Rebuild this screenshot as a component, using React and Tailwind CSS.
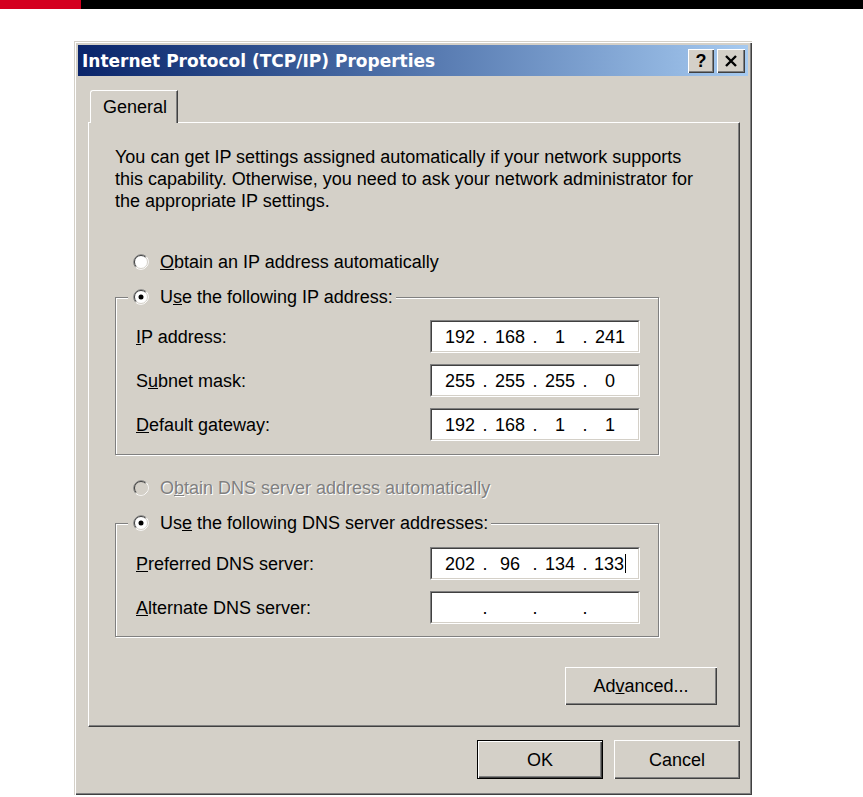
import React from 'react'

const Radio = ({ checked, disabled }) => (
  <svg width="16" height="16" viewBox="0 0 16 16" className="shrink-0">
    <circle cx="8" cy="8" r="7" fill={disabled ? '#d4d0c8' : '#fff'} />
    <path d="M2.7 13.3 A7.5 7.5 0 0 1 13.3 2.7" fill="none" stroke="#808080" />
    <path d="M13.3 2.7 A7.5 7.5 0 0 1 2.7 13.3" fill="none" stroke="#fff" />
    <path d="M3.4 12.6 A6.5 6.5 0 0 1 12.6 3.4" fill="none" stroke="#404040" />
    <path d="M12.6 3.4 A6.5 6.5 0 0 1 3.4 12.6" fill="none" stroke="#d4d0c8" />
    {checked && <circle cx="8" cy="8" r="2.5" fill="#000" />}
  </svg>
)

const IpBox = ({ parts, caret }) => (
  <div className="w-[210px] h-[33px] border border-t-[#808080] border-l-[#808080] border-r-white border-b-white">
    <div className="h-full flex items-center pl-[8px] bg-white border border-t-[#404040] border-l-[#404040] border-r-[#d4d0c8] border-b-[#d4d0c8]">
      {parts.map((p, i) => (
        <React.Fragment key={i}>
          <span className="w-[40px] flex items-center justify-center">
            {p}
            {caret && i === 3 && <span className="inline-block w-px h-[19px] bg-black ml-px" />}
          </span>
          {i < 3 && <span className="w-[10px] text-center">.</span>}
        </React.Fragment>
      ))}
    </div>
  </div>
)

const Field = ({ label, parts, caret }) => (
  <div className="flex items-center justify-between h-[33px]">
    <span>{label}</span>
    <IpBox parts={parts} caret={caret} />
  </div>
)

const Group = ({ legend, children, pt, pb }) => (
  <fieldset className="w-[544px] border border-[#808080] shadow-[inset_1px_1px_0_#fff,1px_1px_0_#fff]">
    <legend className="ml-[12px] pl-[5px] pr-[3px] bg-[#d4d0c8]">
      <div className="flex items-center h-[22px]">
        <Radio checked />
        <span className="ml-[11px]">{legend}</span>
      </div>
    </legend>
    <div className={`flex flex-col gap-[11px] pl-[20px] pr-[18px] ${pt} ${pb}`}>{children}</div>
  </fieldset>
)

const Button = ({ children, wide, isDefault }) => (
  <div
    className={`flex items-center justify-center bg-[#d4d0c8] ${wide ? 'w-[152px] h-[38px]' : 'w-[126px] h-[39px]'} ${
      isDefault
        ? 'border border-black shadow-[inset_1px_1px_0_#fff,inset_-1px_-1px_0_#404040,inset_-2px_-2px_0_#808080]'
        : 'shadow-[inset_1px_1px_0_#fff,inset_-1px_-1px_0_#404040,inset_-2px_-2px_0_#808080]'
    }`}
  >
    {children}
  </div>
)

export default function App() {
  return (
    <div className="h-[797px] overflow-hidden bg-white font-['Liberation_Sans',Arial,sans-serif] text-[18px] leading-[22px] text-black">
      <div className="flex h-[9px]">
        <div className="w-[81px] bg-[#d4001f]" />
        <div className="flex-1 bg-black" />
      </div>

      <div className="ml-[74px] mt-[32px] w-[678px] bg-[#d4d0c8] p-[4px] shadow-[inset_1px_1px_0_#d4d0c8,inset_2px_2px_0_#fff,inset_-1px_-1px_0_#404040,inset_-2px_-2px_0_#808080]">
        {/* Title bar */}
        <div className="h-[31px] flex items-center justify-between bg-linear-to-r from-[#0a246a] to-[#a6caf0] pl-[4px]">
          <span className="font-['DejaVu_Sans',sans-serif] font-bold text-[17px] text-white">
            Internet Protocol (TCP/IP) Properties
          </span>
          <div className="flex gap-[3px] mr-[3px]">
            <div className="w-[26px] h-[24px] flex items-center justify-center bg-[#d4d0c8] font-bold text-[18px] shadow-[inset_1px_1px_0_#fff,inset_-1px_-1px_0_#404040,inset_-2px_-2px_0_#808080]">
              ?
            </div>
            <div className="w-[28px] h-[24px] flex items-center justify-center bg-[#d4d0c8] shadow-[inset_1px_1px_0_#fff,inset_-1px_-1px_0_#404040,inset_-2px_-2px_0_#808080]">
              <svg width="14" height="12" viewBox="0 0 14 12">
                <path d="M2 1 L12 11 M12 1 L2 11" stroke="#000" strokeWidth="2.4" />
              </svg>
            </div>
          </div>
        </div>

        <div className="pl-[10px] pr-[8px] pt-[14px] pb-[12px]">
          {/* Tab */}
          <div className="flex">
            <div className="relative z-10 -mb-px ml-[2px] w-[88px] h-[33px] flex items-center pl-[12px] bg-[#d4d0c8] border-t border-l border-white border-r border-r-[#404040] rounded-tl-[3px] shadow-[inset_-1px_0_0_#808080]">
              General
            </div>
          </div>

          {/* Panel */}
          <div className="border border-white border-r-[#404040] border-b-[#404040] shadow-[inset_-1px_-1px_0_#808080] pl-[26px] pr-[22px] pt-[23px] pb-[21px]">
            <p className="whitespace-nowrap">
              You can get IP settings assigned automatically if your network supports
              <br />
              this capability. Otherwise, you need to ask your network administrator for
              <br />
              the appropriate IP settings.
            </p>

            <div className="flex items-center h-[22px] mt-[39px] ml-[18px]">
              <Radio />
              <span className="ml-[11px]">
                <u>O</u>btain an IP address automatically
              </span>
            </div>

            <div className="mt-[13px]">
              <Group
                pt="pt-[12px]"
                pb="pb-[13px]"
                legend={
                  <>
                    U<u>s</u>e the following IP address:
                  </>
                }
              >
                <Field label={<><u>I</u>P address:</>} parts={['192', '168', '1', '241']} />
                <Field label={<>S<u>u</u>bnet mask:</>} parts={['255', '255', '255', '0']} />
                <Field label={<><u>D</u>efault gateway:</>} parts={['192', '168', '1', '1']} />
              </Group>
            </div>

            <div className="flex items-center h-[22px] mt-[22px] ml-[18px]">
              <Radio disabled />
              <span className="ml-[11px] text-[#808080] [text-shadow:1px_1px_0_#fff]">
                O<u>b</u>tain DNS server address automatically
              </span>
            </div>

            <div className="mt-[13px]">
              <Group
                pt="pt-[13px]"
                pb="pb-[12px]"
                legend={
                  <>
                    Us<u>e</u> the following DNS server addresses:
                  </>
                }
              >
                <Field label={<><u>P</u>referred DNS server:</>} parts={['202', '96', '134', '133']} caret />
                <Field label={<><u>A</u>lternate DNS server:</>} parts={['', '', '', '']} />
              </Group>
            </div>

            <div className="flex justify-end mt-[30px]">
              <Button wide>
                <span>
                  Ad<u>v</u>anced...
                </span>
              </Button>
            </div>
          </div>

          <div className="flex justify-end gap-[11px] mt-[13px]">
            <Button isDefault>OK</Button>
            <Button>Cancel</Button>
          </div>
        </div>
      </div>
    </div>
  )
}
